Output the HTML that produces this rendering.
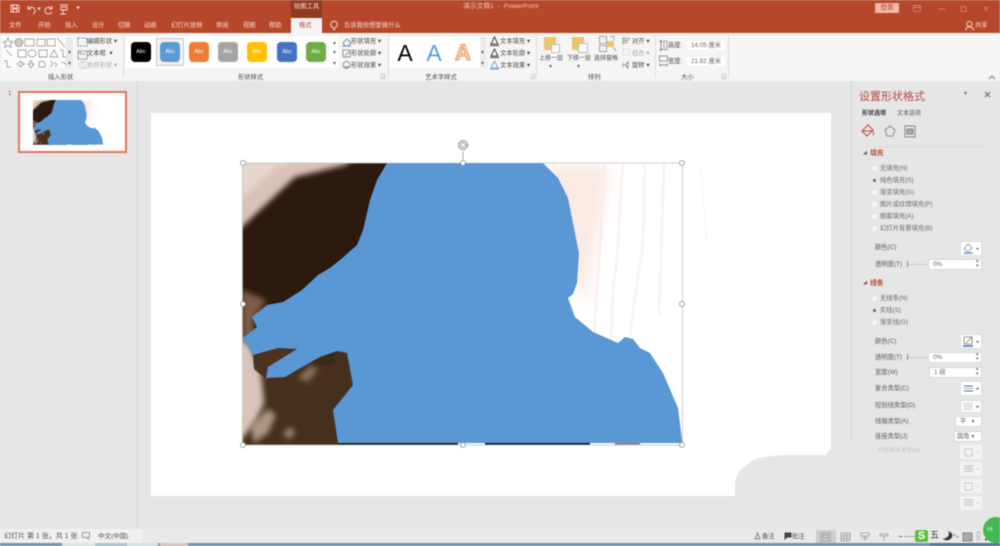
<!DOCTYPE html>
<html lang="zh-CN"><head><meta charset="utf-8"><title>演示文稿1 - PowerPoint</title>
<style>
html,body{margin:0;padding:0;width:1000px;height:546px;overflow:hidden;background:#e6e6e6}
#w{position:absolute;left:0;top:0;width:1000px;height:546px;overflow:hidden;filter:blur(.55px);font-family:"Liberation Sans","Noto Sans CJK SC",sans-serif}
#w div{position:absolute}
.t{white-space:nowrap;font-size:6.3px;line-height:10px;height:10px;color:#4a4a4a;transform:translateY(-3.8px)}
.s{font-size:7px}
.w{color:#f6ddd5}
.g{color:#aaa}
.r{color:#c0492f;font-weight:bold;font-size:6.800px}
.sw{width:20px;height:20px;border-radius:4px;top:42px;color:#fff;font-size:5.500px;line-height:20px;text-align:center}
.ra{width:5px;height:5px;border-radius:50%;background:#f7f7f7;left:872px}
.box{background:#fff;border:1px solid #d8d8d8;box-sizing:border-box;font-size:6.300px;line-height:10px;color:#666;padding-left:4px;white-space:nowrap}
.arr{font-size:6px;color:#666;line-height:6px}
svg{position:absolute;overflow:visible}
</style></head><body><div id="w">

<!-- title bar -->
<div style="left:0;top:0;width:1000px;height:33px;background:#b7472a"></div>
<div style="left:291px;top:0;width:31px;height:18px;background:#913a22"></div>
<div style="left:291px;top:18px;width:31px;height:16px;background:#f4f4f4"></div>
<div class="t w" style="left:294px;top:6px;font-size:6.300px">绘图工具</div>
<svg style="left:0;top:0" width="100" height="18" fill="none" stroke="#f3d9d0" stroke-width="1">
<path d="M11 5h7l1 1v6h-8zM13 5v3h4V5M13 12V9h4v3"/>
<path d="M28 6v3h3M28 9c2-3 7-2 7 2 0 2-1 2.500-2 3"/><path d="M38 8h2l-1 1.500z" fill="#f3d9d0"/>
<path d="M52 6v3h-3M52 9c-2-3-7-2-7 2 0 3 5 4 7 1"/>
<path d="M60 5h8M61 7h6v3h-6zM63 10v4M60 14h6"/><path d="M77 7h2l-1 1.500z" fill="#f3d9d0"/>
</svg>
<div class="t w" style="left:463px;top:6px;font-size:6.800px;color:#eec3b6">演示文稿1&nbsp; -&nbsp; PowerPoint</div>
<div style="left:875px;top:3px;width:24px;height:10px;background:#f0b9a5;color:#b7472a;font-size:6.500px;line-height:10px;text-align:center">登录</div>
<svg style="left:913px;top:3px" width="85" height="12" fill="none" stroke="#cf7d66" stroke-width="1"><path d="M.5 2.500h7v6h-7zM.5 4.500h7"/><path d="M26 6h6"/><path d="M48 3.500h5v5h-5z"/><path d="M71 3.500l4 4M75 3.500l-4 4"/></svg>
<div class="t w" style="left:9px;top:25px">文件</div>
<div class="t w" style="left:38px;top:25px">开始</div>
<div class="t w" style="left:65px;top:25px">插入</div>
<div class="t w" style="left:92px;top:25px">设计</div>
<div class="t w" style="left:118px;top:25px">切换</div>
<div class="t w" style="left:144px;top:25px">动画</div>
<div class="t w" style="left:171px;top:25px">幻灯片放映</div>
<div class="t w" style="left:216px;top:25px">审阅</div>
<div class="t w" style="left:243px;top:25px">视图</div>
<div class="t w" style="left:269px;top:25px">帮助</div>
<div class="t" style="left:299px;top:25px;color:#b7472a">格式</div>
<svg style="left:329px;top:20px" width="10" height="12" fill="none" stroke="#f3d9d0"><circle cx="5" cy="4.500" r="3.300"/><path d="M3.500 9.500h3"/></svg>
<div class="t w" style="left:344px;top:25px;font-size:6.300px">告诉我你想要做什么</div>
<svg style="left:965px;top:21px" width="9" height="10" fill="none" stroke="#f3d9d0"><circle cx="4.500" cy="3" r="2.500"/><path d="M.5 9.500c0-5 8-5 8 0"/></svg>
<div class="t w" style="left:975px;top:25px">共享</div>

<!-- ribbon -->
<div style="left:0;top:33px;width:1000px;height:48px;background:#f5f5f5"></div>
<div style="left:123px;top:35px;width:1px;height:43px;background:#dedede"></div>
<div style="left:388px;top:35px;width:1px;height:43px;background:#dedede"></div>
<div style="left:536px;top:35px;width:1px;height:43px;background:#dedede"></div>
<div style="left:655px;top:35px;width:1px;height:43px;background:#dedede"></div>
<div style="left:728px;top:35px;width:1px;height:43px;background:#dedede"></div>

<!-- insert shapes -->
<div style="left:2px;top:36px;width:72px;height:32px;background:#fbfbfb"></div>
<svg style="left:3px;top:37px" width="72" height="32" fill="none" stroke="#8a8a8a" stroke-width=".7">
<path d="M5 1l1.500 3.500 3.500.3-2.700 2.200 1 3.500L5 8.700 1.700 10.500l1-3.500L0 4.800l3.500-.3z"/>
<circle cx="16" cy="5.500" r="4" fill="#ccc"/><path d="M22 2h9v7h-9zM34 2h8v7h-8zM44 2h8v7h-8z"/><path d="M54 1l8 9"/>
<path d="M3 13l6 6M15 13h8v7h-8z"/><ellipse cx="29" cy="16.500" rx="4" ry="3.500"/><path d="M36 13h8v7h-8zM51 13l4 7h-8zM57 13h3v7h4"/>
<path d="M1 24h3v6h4M14 27l4-3v2h3v2h-3v2zM27 24h2v3h2l-3 4-3-4h2zM36 30v-5l3-1 3 2v4zM47 24l3 3-3 3M51 25l3 3-2 2M58 25c3 0 5 2 6 5"/>
</svg>
<div style="left:66px;top:37px;width:7px;height:31px;background:#e9e9e9"></div>
<div class="arr" style="left:68px;top:50px">▾</div><div class="arr" style="left:68px;top:61px">▾</div>
<svg style="left:77px;top:36px" width="12" height="34" fill="none" stroke="#888" stroke-width=".8"><path d="M1 2h9v8H1z" stroke-dasharray="2 1.200" stroke="#4a6fa5"/><path d="M1 15h9v8H1zM3 15v3h5"/><circle cx="5" cy="29" r="3.500" stroke="#ccc"/><circle cx="8" cy="29" r="3.500" stroke="#ccc"/></svg>
<div class="t" style="left:87px;top:41px">编辑形状 ▾</div>
<div class="t" style="left:87px;top:53px">文本框 &nbsp;▾</div>
<div class="t g" style="left:87px;top:65px">合并形状 ▾</div>
<div class="t" style="left:48px;top:77px">插入形状</div>

<!-- shape styles -->
<div style="left:126px;top:36px;width:212px;height:32px;background:#fff"></div>
<div style="left:156px;top:38px;width:28px;height:28px;border:1px solid #c6c6c6;box-sizing:border-box;background:#f2f2f2"></div>
<div class="sw" style="left:131px;background:#000">Abc</div>
<div class="sw" style="left:160px;background:#5b9bd5">Abc</div>
<div class="sw" style="left:189px;background:#ed7d31">Abc</div>
<div class="sw" style="left:218px;background:#a5a5a5">Abc</div>
<div class="sw" style="left:247px;background:#ffc000">Abc</div>
<div class="sw" style="left:277px;background:#4472c4">Abc</div>
<div class="sw" style="left:306px;background:#70ad47">Abc</div>
<div class="arr" style="left:333px;top:40px">▴</div><div class="arr" style="left:333px;top:50px">▾</div><div class="arr" style="left:333px;top:61px">▾</div>
<svg style="left:342px;top:36px" width="10" height="34" fill="none" stroke="#777" stroke-width=".8"><path d="M1 7l4-4 4 4-3 3H3z"/><path d="M0 10h9" stroke="#5b9bd5" stroke-width="1.200"/><path d="M1 14h7v7H1zM3 20l5-5" /><circle cx="4.500" cy="29" r="3.500"/><path d="M2 31h5" stroke="#999" stroke-width="1.500"/></svg>
<div class="t" style="left:351px;top:41px">形状填充 ▾</div>
<div class="t" style="left:351px;top:53px">形状轮廓 ▾</div>
<div class="t" style="left:351px;top:65px">形状效果 ▾</div>
<div class="t" style="left:238px;top:77px">形状样式</div>

<!-- wordart -->
<div style="left:390px;top:37px;width:90px;height:31px;background:#fff"></div>
<div style="left:480px;top:37px;width:6px;height:31px;background:#ececec"></div>
<div style="left:390px;top:38px;width:30px;height:30px;font-size:23px;line-height:30px;text-align:center;color:#000">A</div>
<div style="left:419px;top:38px;width:30px;height:30px;font-size:23px;line-height:30px;text-align:center;color:#5b9bd5">A</div>
<div style="left:448px;top:38px;width:30px;height:30px;font-size:22px;line-height:30px;text-align:center;color:#f9d3b4;-webkit-text-stroke:1px #ed9a5a;font-weight:bold">A</div>
<div class="arr" style="left:481px;top:50px">▾</div><div class="arr" style="left:481px;top:61px">▾</div>
<svg style="left:489px;top:36px" width="11" height="34" fill="none" stroke="#444"><path d="M5.500 1L2 8h7zM1 9.500h9" stroke-width="1"/><path d="M5.500 13L2 20h7zM1 21.500h9" stroke-width="1"/><path d="M5.500 25L2 32h7zM1 33h9" stroke="#5b8fc5" stroke-width=".8"/></svg>
<div class="t" style="left:500px;top:41px">文本填充 ▾</div>
<div class="t" style="left:500px;top:53px">文本轮廓 ▾</div>
<div class="t" style="left:500px;top:65px">文本效果 ▾</div>
<div class="t" style="left:441px;top:77px;transform:translate(-50%,-3.800px)">艺术字样式</div>
<div class="arr" style="left:380px;top:74px;color:#999">◲</div>
<div class="arr" style="left:530px;top:74px;color:#999">◲</div>
<div class="arr" style="left:721px;top:74px;color:#999">◲</div>

<!-- arrange -->
<div style="left:544px;top:37px;width:12px;height:13px;background:#eec36f"></div>
<div style="left:551px;top:44px;width:7px;height:7px;background:#fbfbfb;border:1px solid #bbb"></div>
<div style="left:572px;top:37px;width:12px;height:13px;background:#eec36f"></div>
<div style="left:578px;top:43px;width:8px;height:8px;background:#fbfbfb;border:1px solid #bbb"></div>
<svg style="left:599px;top:36px" width="18" height="17" fill="none" stroke="#a5a5a5"><path d="M.5.5h7v7h-7zM.5 9.500h7v6h-7z"/><path d="M8 5h7v6H8z" fill="#eec36f" stroke="none"/><path d="M11 .5h4v4"/><path d="M14 11l3 4" /></svg>
<div class="t" style="left:539px;top:58px;font-size:6px">上移一层</div>
<div class="t" style="left:567px;top:58px;font-size:6px">下移一层</div>
<div class="t" style="left:594px;top:58px;font-size:6px">选择窗格</div>
<div class="arr" style="left:549px;top:64px">▾</div><div class="arr" style="left:577px;top:64px">▾</div>
<svg style="left:622px;top:36px" width="9" height="34" fill="none" stroke="#999" stroke-width=".8"><path d="M1 1v8M2 2h5v2H2zM2 5h3v2H2z"/><path d="M1 13h6v6H1z" stroke="#ccc" stroke-dasharray="1.500 1"/><path d="M3 29l3-3v6zM1 27v4" stroke="#777"/></svg>
<div class="t" style="left:632px;top:41px">对齐 ▾</div>
<div class="t g" style="left:632px;top:53px">组合 ▾</div>
<div class="t" style="left:632px;top:65px">旋转 ▾</div>
<div class="t" style="left:588px;top:77px">排列</div>

<!-- size -->
<svg style="left:659px;top:40px" width="9" height="27" fill="none" stroke="#777" stroke-width=".8"><path d="M2 .5v10M.5 2L2 .5 3.500 2M.5 9L2 10.500 3.500 9"/><path d="M5 1h3v9H5z" stroke="#88a"/><path d="M.5 16h8v5h-8zM1 25h7M1 23.500v3M8 23.500v3"/></svg>
<div class="t" style="left:668px;top:45px">高度:</div>
<div class="t" style="left:668px;top:61px">宽度:</div>
<div class="box" style="left:686px;top:40px;width:40px;height:11px;border-color:#f2f2f2">14.05 厘米</div>
<div class="box" style="left:686px;top:56px;width:40px;height:11px;border-color:#f2f2f2">21.82 厘米</div>
<div class="t" style="left:681px;top:77px">大小</div>
<svg style="left:988px;top:75px" width="8" height="5" fill="none" stroke="#777"><path d="M1 4l3-3 3 3"/></svg>

<!-- thumb panel & workspace -->
<div style="left:137px;top:81px;width:1px;height:448px;background:#d6d6d6"></div>
<div class="t" style="left:8px;top:93px;color:#c0492f">1</div>
<div style="left:18px;top:91px;width:109px;height:62px;box-sizing:border-box;border:2px solid #e2755a;background:#fff"></div>

<!-- slide -->
<div style="left:151px;top:113px;width:680px;height:383px;background:#fff"></div>

<svg width="0" height="0" style="left:0;top:0"><defs>
<filter id="b2" x="-30%" y="-30%" width="160%" height="160%"><feGaussianBlur stdDeviation="7"/></filter>
<filter id="b1" x="-30%" y="-30%" width="160%" height="160%"><feGaussianBlur stdDeviation="3"/></filter>
<filter id="b3" x="-30%" y="-30%" width="160%" height="160%"><feGaussianBlur stdDeviation=".7"/></filter>
<clipPath id="cp"><rect x="242" y="163" width="441" height="282"/></clipPath>
<g id="pic"><g clip-path="url(#cp)">
<rect x="242" y="163" width="145" height="190" fill="#2b1a0d"/>
<path d="M225 150h140l-20 15-50 12-53 50h-17z" fill="#d9c3b7" filter="url(#b1)"/>
<path d="M225 150h90l-40 18-33 30h-17z" fill="#e6d6cd" filter="url(#b1)"/>
<path d="M242 290l24 10-12 20 0 20-12 0z" fill="#7d5c48" filter="url(#b1)"/>
<rect x="242" y="345" width="115" height="100" fill="#46301d"/>
<path d="M295 345l40 0 0 20-30 0z" fill="#3d2917"/>
<path d="M236 335l14 10 11 28 3 30-8 18-20 25z" fill="#d8c6ba" filter="url(#b1)"/>
<path d="M250 425l18-16 8 6-8 18-14 10z" fill="#ac9683" filter="url(#b1)"/>
<path d="M283 435l6-8 6 4-4 8z" fill="#a08a76" filter="url(#b1)"/>
<path d="M298 378l12-12 8 3-10 13z" fill="#8a735d" filter="url(#b1)"/>
<path d="M253 355l25-7 19 1-29 18-2 12-12-10z" fill="#4c3320"/>
<rect x="540" y="163" width="143" height="282" fill="#fff"/>
<path d="M545 165h65l-25 140-20-50z" fill="#fbe9e3" filter="url(#b2)"/>
<g fill="none" stroke="#f9e3e3" stroke-width="1.400" filter="url(#b3)"><path d="M604 165l-4 80-6 90"/><path d="M623 165c-5 50-3 90-10 120l-2 60"/><path d="M645 165c-3 40 2 70-7 110l-8 60"/><path d="M664 165l-5 150"/></g>
<g><rect x="338" y="442" width="120" height="3" fill="#1f160e"/><rect x="458" y="442" width="27" height="3" fill="#fff"/><rect x="485" y="442" width="105" height="3" fill="#16191c"/><rect x="590" y="442" width="25" height="3" fill="#fff"/><rect x="615" y="442" width="25" height="3" fill="#9c7f74"/></g>
<path fill="#5a97d5" d="M387 163L543 163L558 178L568 198L573 223L579 253L577 283L573 294L568 298L575 317L593 332L618 343L625 337L633 339L640 348L650 353L663 373L678 408L682 440L682 443L338 443L333 410L353 385L347 353L337 351L320 357L302 367L285 377L266 378L268 367L297 349L278 348L253 355L243 338L257 327L252 317L267 305L283 302L302 290L318 275L330 268L340 260L357 245L363 230L370 200L377 180Z"/>
</g></g></defs></svg>

<svg style="left:0;top:0" width="1000" height="546"><use href="#pic"/>
<path d="M701 166l2 30 4 45" stroke="#fcf3f2" fill="none"/>
<rect x="242.500" y="163" width="440" height="282" fill="none" stroke="#c4c4c4" stroke-width=".8"/>
<path d="M463 163v-12" stroke="#aaa"/>
<circle cx="463" cy="145" r="4.500" fill="#ddd" stroke="#999"/><circle cx="463" cy="145" r="2" fill="#fff" stroke="#999" stroke-width=".7"/><path d="M466 145h3" stroke="#999"/>
<g fill="#fff" stroke="#8a8a8a" stroke-width=".8"><circle cx="243" cy="163" r="2.500"/><circle cx="463" cy="163" r="2.500"/><circle cx="682" cy="163" r="2.500"/><circle cx="243" cy="304" r="2.500"/><circle cx="682" cy="304" r="2.500"/><circle cx="243" cy="445" r="2.500"/><circle cx="463" cy="445" r="2.500"/><circle cx="682" cy="445" r="2.500"/></g>
<path d="M735 497V483Q737 470 747 465Q752 459 760 458Q775 455 787 455H825L832 448V497Z" fill="#e6e6e6"/>
<g transform="translate(33 100) scale(.159) translate(-242 -163)"><use href="#pic"/></g>
</svg>

<!-- right pane -->
<div style="left:851px;top:81px;width:1px;height:360px;background:#d4d4d4"></div>
<div style="left:859px;top:90px;font-size:11px;line-height:15px;color:#b5483a;white-space:nowrap">设置形状格式</div>
<div class="arr" style="left:964px;top:91px;font-size:6px">▾</div>
<svg style="left:984px;top:91px" width="7" height="7" stroke="#666" stroke-width="1"><path d="M1 1l5 5M6 1L1 6"/></svg>
<div class="t" style="left:862px;top:113px;font-weight:bold;color:#333;font-size:6px">形状选项</div>
<div class="t" style="left:897px;top:113px;color:#555;font-size:6px">文本选项</div>
<svg style="left:860px;top:124px" width="60" height="14" fill="none" stroke-width="1"><path d="M8 1L2 7l5 5 6-6zM3 7h9M13 7c1 2 1 3 0 4" stroke="#c0492f"/><path d="M30 2l5 4-2 6h-6l-2-6z" stroke="#888"/><rect x="45" y="2" width="10" height="11" stroke="#888"/><path d="M47 5h6v5h-6z" fill="#aaa" stroke="#888"/></svg>
<div style="left:862px;top:146px;width:122px;height:1px;background:#dadada"></div>

<div class="arr" style="left:863px;top:150px;font-size:4px;line-height:6px">◢</div><div class="t r" style="left:870px;top:153px">填充</div>
<div class="ra" style="top:166px"></div><div class="t" style="left:880px;top:168px;color:#6a6a6a">无填充(N)</div>
<div class="ra" style="background:#666;width:3px;height:3px;left:873px;top:179px"></div><div class="t" style="left:880px;top:180px;color:#6a6a6a">纯色填充(S)</div>
<div class="ra" style="top:190px"></div><div class="t" style="left:880px;top:192px;color:#6a6a6a">渐变填充(G)</div>
<div class="ra" style="top:202px"></div><div class="t" style="left:880px;top:204px;color:#6a6a6a">图片或纹理填充(P)</div>
<div class="ra" style="top:214px"></div><div class="t" style="left:880px;top:216px;color:#6a6a6a">图案填充(A)</div>
<div class="ra" style="top:226px"></div><div class="t" style="left:880px;top:228px;color:#6a6a6a">幻灯片背景填充(B)</div>
<div class="t" style="left:875px;top:247px;color:#5a5a5a">颜色(C)</div>
<div style="left:960px;top:241px;width:22px;height:15px;background:#fff;border:1px solid #dcdcdc;box-sizing:border-box"></div>
<svg style="left:963px;top:243px" width="16" height="11" fill="none" stroke="#888" stroke-width=".8"><path d="M5 1L1 6l4 3 4-4z"/><path d="M1 10h9" stroke="#5b9bd5" stroke-width="1.500"/><path d="M13 5h3l-1.500 2z" fill="#555" stroke="none"/></svg>
<div class="t" style="left:875px;top:264px;color:#5a5a5a">透明度(T)</div>
<div style="left:907px;top:261px;width:1px;height:6px;background:#888"></div><div style="left:908px;top:264px;width:21px;height:1px;background:#c8c8c8"></div>
<div class="box" style="left:928px;top:259px;width:54px;height:11px">0%</div>
<div class="arr" style="left:976px;top:259px;font-size:5px;line-height:5px">▴<br>▾</div>

<div class="arr" style="left:863px;top:280px;font-size:4px;line-height:6px">◢</div><div class="t r" style="left:870px;top:283px">线条</div>
<div class="ra" style="top:296px"></div><div class="t" style="left:880px;top:298px;color:#6a6a6a">无线条(N)</div>
<div class="ra" style="background:#666;width:3px;height:3px;left:873px;top:309px"></div><div class="t" style="left:880px;top:310px;color:#6a6a6a">实线(S)</div>
<div class="ra" style="top:320px"></div><div class="t" style="left:880px;top:322px;color:#6a6a6a">渐变线(G)</div>
<div class="t" style="left:875px;top:341px;color:#5a5a5a">颜色(C)</div>
<div style="left:960px;top:334px;width:22px;height:15px;background:#fff;border:1px solid #dcdcdc;box-sizing:border-box"></div>
<svg style="left:963px;top:336px" width="16" height="11" fill="none" stroke="#777" stroke-width=".8"><path d="M1 1h8v7H1zM3 7l6-6"/><path d="M0 10h10" stroke="#2f75b5" stroke-width="1.500"/><path d="M13 5h3l-1.500 2z" fill="#555" stroke="none"/></svg>
<div class="t" style="left:875px;top:357px;color:#5a5a5a">透明度(T)</div>
<div style="left:907px;top:354px;width:1px;height:6px;background:#888"></div><div style="left:908px;top:357px;width:21px;height:1px;background:#c8c8c8"></div>
<div class="box" style="left:928px;top:352px;width:54px;height:11px">0%</div>
<div class="arr" style="left:976px;top:352px;font-size:5px;line-height:5px">▴<br>▾</div>
<div class="t" style="left:875px;top:372px;color:#5a5a5a">宽度(W)</div>
<div class="box" style="left:929px;top:367px;width:53px;height:11px">1 磅</div>
<div class="arr" style="left:976px;top:367px;font-size:5px;line-height:5px">▴<br>▾</div>
<div class="t" style="left:875px;top:388px;color:#5a5a5a">复合类型(C)</div>
<div style="left:960px;top:381px;width:22px;height:15px;background:#fff;border:1px solid #dcdcdc;box-sizing:border-box"></div>
<svg style="left:964px;top:385px" width="16" height="8" fill="none" stroke="#4a6f9c"><path d="M0 1h9M0 6h9" /><path d="M0 3.500h9" stroke="#aaa"/><path d="M12 3h3l-1.500 2z" fill="#555" stroke="none"/></svg>
<div class="t" style="left:875px;top:405px;color:#5a5a5a">短划线类型(D)</div>
<div style="left:960px;top:400px;width:22px;height:13px;background:#fbfbfb;border:1px solid #ddd;box-sizing:border-box"></div>
<svg style="left:964px;top:403px" width="16" height="8" fill="none" stroke="#aaa"><path d="M0 1h9M0 3.500h9M0 6h9" stroke-dasharray="2 1"/><path d="M12 3h3l-1.500 2z" fill="#555" stroke="none"/></svg>
<div class="t" style="left:875px;top:421px;color:#5a5a5a">线端类型(A)</div>
<div class="box" style="left:955px;top:416px;width:27px;height:11px">平 &nbsp;&nbsp;<span style="font-size:6px">▾</span></div>
<div class="t" style="left:875px;top:436px;color:#5a5a5a">连接类型(J)</div>
<div class="box" style="left:954px;top:431px;width:28px;height:11px;padding-left:2px">圆角 <span style="font-size:6px">▾</span></div>
<div class="t" style="left:878px;top:450px;color:#c4c4c4;font-size:5.800px">开始箭头类型(B)</div>
<div style="left:960px;top:445px;width:22px;height:14px;background:#f2f2f2"></div>
<div style="left:960px;top:462px;width:22px;height:14px;background:#f2f2f2"></div>
<div style="left:960px;top:479px;width:22px;height:14px;background:#f2f2f2"></div>
<div style="left:960px;top:496px;width:22px;height:14px;background:#f2f2f2"></div>
<svg style="left:964px;top:447px" width="16" height="62" fill="none" stroke="#b8b8b8"><path d="M1 2h7v7H1z" stroke-dasharray="2 1"/><path d="M0 19h9M0 21.500h9M0 24h9"/><path d="M1 36h7v7H1z" stroke-dasharray="2 1"/><path d="M0 53h9M0 55.500h9M0 58h9"/><path d="M13 5h2M13 22h2M13 39h2M13 56h2" stroke="#ccc"/></svg>

<!-- status bar -->
<div style="left:0;top:529px;width:1000px;height:14px;background:#e9e9e9"></div>
<div style="left:0;top:529px;width:143px;height:14px;background:#f0f0f0"></div>
<div class="t s" style="left:4px;top:536px;color:#555">幻灯片 第 1 张，共 1 张</div>
<svg style="left:82px;top:532px" width="9" height="8" fill="none" stroke="#999"><path d="M.5.500h7v5h-7zM5 6l2 1.500"/></svg>
<div class="t s" style="left:98px;top:536px;color:#555;font-size:6.500px">中文(中国)</div>
<svg style="left:754px;top:532px" width="40" height="8" fill="none" stroke="#888"><path d="M3.500 1L1 7h5z"/><path d="M31 1h6v4h-4l-2 2z" fill="#444" stroke="#444"/></svg>
<div class="t" style="left:762px;top:536px;color:#555">备注</div>
<div class="t" style="left:792px;top:536px;color:#555">批注</div>
<div style="left:816px;top:530px;width:20px;height:13px;background:#cdcdcd"></div>
<svg style="left:820px;top:532px" width="75" height="10" fill="none" stroke="#999" stroke-width=".8"><path d="M1 1h9v8H1zM3 3h5v3H3z"/><path d="M21 1h9v8h-9zM21 4h9M21 6.500h9M24 1v8M27 1v8"/><path d="M41 1h8v3h-8zM42 6h6M45 4v5"/><path d="M60 2h8v2h-8zM64 4v5"/></svg>
<div style="left:899px;top:536px;width:3px;height:1px;background:#666"></div>
<div style="left:904px;top:536px;width:11px;height:1px;background:#aaa"></div>
<div style="left:915px;top:530px;width:13px;height:12px;background:#5fbe3f;border-radius:2px;color:#fff;font-weight:bold;font-size:11px;line-height:12px;text-align:center">S</div>
<div class="t" style="left:930px;top:534px;font-size:9px;color:#333">五</div>
<svg style="left:943px;top:530px" width="50" height="13" fill="none" stroke="#444"><path d="M6 2c1 4-1 6-5 7 3 2 8 0 8-4 0-1-1-2-3-3z" fill="#333"/><path d="M11 5h1M14 7h1" stroke-width="1.500"/><path d="M20 3h9v8h-9z" fill="#a9a9a9" stroke="#888"/><path d="M34 2h3v5h-3zM33 9h5" stroke="#bbb"/><path d="M44 3v6l-2 1" stroke="#333" stroke-width="1.400"/></svg>
<div style="left:983px;top:517px;width:26px;height:26px;border-radius:50%;background:#3fbb4f;color:#d5f5d5;font-size:6px;line-height:26px;text-indent:4px;overflow:hidden">Hi</div>

<!-- taskbar -->
<div style="left:0;top:543px;width:1000px;height:3px;background:#6f95b6"></div>
<div style="left:62px;top:543px;width:33px;height:3px;background:#dbe5df"></div>
<div style="left:95px;top:543px;width:32px;height:3px;background:#a9c4d8"></div>
<div style="left:127px;top:543px;width:31px;height:3px;background:#d5e2e5"></div>
<div style="left:160px;top:543px;width:28px;height:3px;background:#d8c4c0"></div>
<div style="left:930px;top:543px;width:70px;height:3px;background:#4f7899"></div>
</div></body></html>
